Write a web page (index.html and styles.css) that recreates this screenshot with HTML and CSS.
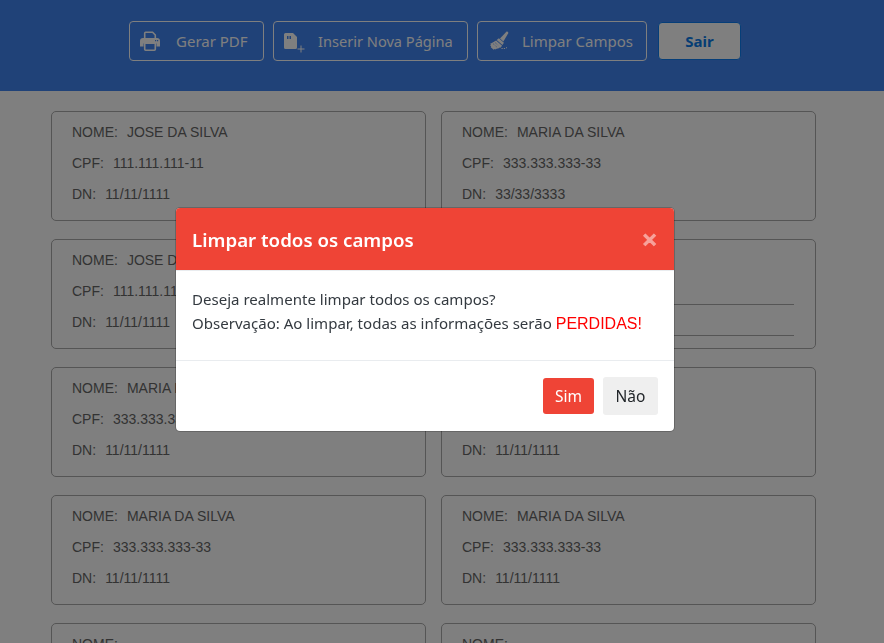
FILE: index.html
```html
<!DOCTYPE html>
<html>

<head>
	<meta charset="utf-8">
	<title>Ficha</title>
	<link rel="stylesheet" href="styles.css">
</head>

<body>

	<div class="topbar">
		<button class="toolbtn btn-pdf">
			<svg class="toolicon" viewBox="0 0 20 20"><path class="line" d="M4.700 7.500V2.200a.9.9 0 0 1 .9-.9h7l2.700 2.700v3.500"/><path d="M3 7h14a3 3 0 0 1 3 3v5.500h-3.500v-3h-13v3H0V10a3 3 0 0 1 3-3z"/><path class="line" d="M4.700 12.300h10.600v6a.9.9 0 0 1-.9.9H5.600a.9.9 0 0 1-.9-.9z"/><path class="cut" d="M15 9h1.200v1.200H15zM17 9h1.200v1.200H17z"/></svg>
			Gerar PDF
		</button>
		<button class="toolbtn btn-page">
			<svg class="toolicon" viewBox="0 0 20 20"><path d="M1.500 2h7.500L13 6v10.500a1.500 1.500 0 0 1-1.500 1.500h-10A1.500 1.500 0 0 1 0 16.500v-13A1.500 1.500 0 0 1 1.500 2z"/><path class="cut" d="M3 5h1.500v3H3zM5.500 5H7v3H5.500z"/><path d="M16.500 14.500h1v3h3v1h-3v3h-1v-3h-3v-1h3z"/></svg>
			Inserir Nova Página
		</button>
		<button class="toolbtn btn-clean">
			<svg class="toolicon" viewBox="0 0 20 20"><path d="M16.600.6c1-.4 2 .5 1.600 1.600L13.400 10.400 10 7.400z"/><path d="M8.900 7.300l5 4.400-1.500 2.200-5.700-5z"/><path d="M6.100 9.400l6 5.300-1.700 2-1-.3-.4 1.100-1.200-.4-.5 1-1.100-.4-.7.900-1-.5-.8.600L.8 16.300l.4-1-1-.6.600-1-.5-1.100 1.100-.4z"/><path class="hatch" d="M3.200 12.800l3.600 3.200M5 11.500l3.200 3"/><path d="M11.500 17h1.200v1.100h-1.200zM13.800 17h1.300v1h-1.300zM16 16.200h1v1h-1z"/></svg>
			Limpar Campos
		</button>
		<button class="exitbtn">Sair</button>
	</div>

	<div class="sheet">
		<div class="card">
			<div class="row"><span class="lbl">NOME:</span>JOSE DA SILVA</div>
			<div class="row"><span class="lbl">CPF:</span>111.111.111-11</div>
			<div class="row"><span class="lbl">DN:</span>11/11/1111</div>
		</div>
		<div class="card">
			<div class="row"><span class="lbl">NOME:</span>MARIA DA SILVA</div>
			<div class="row"><span class="lbl">CPF:</span>333.333.333-33</div>
			<div class="row"><span class="lbl">DN:</span>33/33/3333</div>
		</div>
		<div class="card">
			<div class="row"><span class="lbl">NOME:</span>JOSE DA SILVA</div>
			<div class="row"><span class="lbl">CPF:</span>111.111.111-11</div>
			<div class="row"><span class="lbl">DN:</span>11/11/1111</div>
		</div>
		<div class="card">
			<div class="row"><span class="lbl">NOME:</span></div>
			<div class="row empty"><span class="lbl">CPF:</span></div>
			<div class="row empty"><span class="lbl">DN:</span></div>
		</div>
		<div class="card">
			<div class="row"><span class="lbl">NOME:</span>MARIA DA SILVA</div>
			<div class="row"><span class="lbl">CPF:</span>333.333.333-33</div>
			<div class="row"><span class="lbl">DN:</span>11/11/1111</div>
		</div>
		<div class="card">
			<div class="row"><span class="lbl">NOME:</span>MARIA DA SILVA</div>
			<div class="row"><span class="lbl">CPF:</span>333.333.333-33</div>
			<div class="row"><span class="lbl">DN:</span>11/11/1111</div>
		</div>
		<div class="card">
			<div class="row"><span class="lbl">NOME:</span>MARIA DA SILVA</div>
			<div class="row"><span class="lbl">CPF:</span>333.333.333-33</div>
			<div class="row"><span class="lbl">DN:</span>11/11/1111</div>
		</div>
		<div class="card">
			<div class="row"><span class="lbl">NOME:</span>MARIA DA SILVA</div>
			<div class="row"><span class="lbl">CPF:</span>333.333.333-33</div>
			<div class="row"><span class="lbl">DN:</span>11/11/1111</div>
		</div>
		<div class="card">
			<div class="row"><span class="lbl">NOME:</span></div>
		</div>
		<div class="card">
			<div class="row"><span class="lbl">NOME:</span></div>
		</div>
	</div>

	<div class="backdrop">
		<div class="dialog">
			<div class="dialog-head">
				<h5>Limpar todos os campos</h5>
				<span class="close">×</span>
			</div>
			<div class="dialog-body">
				Deseja realmente limpar todos os campos?<br>
				Observação: Ao limpar, todas as informações serão <span class="lost">PERDIDAS!</span>
			</div>
			<div class="dialog-foot">
				<button class="btn-yes">Sim</button>
				<button class="btn-no">Não</button>
			</div>
		</div>
	</div>

</body>

</html>
```

FILE: styles.css
```css
html, body {
	height: 100%;
}
body {
	margin: 0;
	overflow: hidden;
	background-color: #ffffff;
	font-family: "Noto Sans", "Open Sans", sans-serif;
}
button {
	font-family: "Noto Sans", "Open Sans", sans-serif;
	cursor: pointer;
}

/* top bar */
.topbar {
	height: 91px;
	box-sizing: border-box;
	padding: 21px 14px 0 0;
	background-color: #4084f0;
	display: flex;
	justify-content: center;
	align-items: flex-start;
	gap: 9px;
}
.toolbtn {
	height: 40px;
	box-sizing: border-box;
	display: flex;
	align-items: center;
	padding: 0 0 0 10px;
	background: transparent;
	border: 1px solid #ffffff;
	border-radius: 4px;
	color: #ffffff;
	font-size: 15px;
	white-space: nowrap;
}
.btn-pdf { width: 135px; }
.btn-page { width: 195px; font-size: 14.600px; }
.btn-clean { width: 170px; padding-left: 12px; }
.toolicon {
	width: 20px;
	height: 20px;
	margin-right: 16px;
	fill: #ffffff;
	overflow: visible;
	flex: none;
}
.btn-page .toolicon { margin-right: 14px; }
.btn-clean .toolicon { margin-right: 12px; }
.cut { fill: #4084f0; }
.line {
	fill: none;
	stroke: #ffffff;
	stroke-width: 1.6;
}
.hatch {
	fill: none;
	stroke: #4084f0;
	stroke-width: 0.7;
	stroke-dasharray: 1 1;
}
.exitbtn {
	width: 83px;
	height: 38px;
	margin: 1px 0 0 2px;
	background-color: #ffffff;
	border: 1px solid #0d7df0;
	border-radius: 4px;
	color: #0a7ae8;
	font-size: 15px;
	font-weight: 700;
}

/* cards */
.sheet {
	display: grid;
	grid-template-columns: 375px 375px;
	column-gap: 15px;
	row-gap: 18px;
	padding: 20px 0 0 51px;
}
.card {
	height: 110px;
	box-sizing: border-box;
	padding: 5px 21px 0 20px;
	border: 1px solid #aaaaaa;
	border-radius: 5px;
	font-family: "Liberation Sans", Arial, sans-serif;
	font-size: 14px;
	color: #666666;
}
.row {
	height: 31px;
	line-height: 31px;
}
.row.empty {
	box-sizing: border-box;
	height: 29px;
	margin-bottom: 2px;
	border-bottom: 1px solid #aaaaaa;
}
.lbl {
	margin-right: 9px;
}

/* dialog */
.backdrop {
	position: fixed;
	top: 0;
	left: 0;
	right: 0;
	bottom: 0;
	background-color: rgba(0, 0, 0, 0.5);
	display: flex;
	justify-content: center;
	align-items: flex-start;
	padding: 207px 34px 0 0;
	box-sizing: border-box;
}
.dialog {
	width: 500px;
	height: 225px;
	box-sizing: border-box;
	background-color: #ffffff;
	border: 1px solid rgba(0, 0, 0, 0.2);
	border-radius: 5px;
	overflow: hidden;
	color: #343a40;
	background-clip: padding-box;
}
.dialog-head {
	height: 63px;
	box-sizing: border-box;
	padding: 0 16px;
	background-color: #ef4436;
	border-bottom: 1px solid #e9ecef;
	display: flex;
	align-items: center;
	justify-content: space-between;
}
.dialog-head h5 {
	margin: 0;
	font-size: 18.700px;
	font-weight: 600;
	color: #ffffff;
}
.close {
	font-family: "DejaVu Sans", sans-serif;
	font-size: 20px;
	font-weight: 700;
	line-height: 1;
	color: #ffffff;
	-webkit-text-stroke: 1px #ffffff;
	opacity: 0.5;
}
.dialog-body {
	height: 89px;
	box-sizing: border-box;
	padding: 16px 16px 0 16px;
	font-size: 15.050px;
	line-height: 24px;
	white-space: nowrap;
}
.lost {
	font-family: "Liberation Sans", Arial, sans-serif;
	font-size: 16px;
	color: #ff0000;
}
.dialog-foot {
	height: 71px;
	box-sizing: border-box;
	padding: 16px 16px 0 16px;
	border-top: 1px solid #e9ecef;
	display: flex;
	justify-content: flex-end;
	align-items: flex-start;
	gap: 9px;
}
.btn-yes, .btn-no {
	border: 0;
	border-radius: 3px;
	font-size: 15.500px;
}
.btn-yes {
	width: 51px;
	height: 36px;
	margin-top: 1px;
	background-color: #ef4436;
	color: #ffffff;
}
.btn-no {
	width: 55px;
	height: 38px;
	background-color: #efefef;
	color: #212529;
}
```
